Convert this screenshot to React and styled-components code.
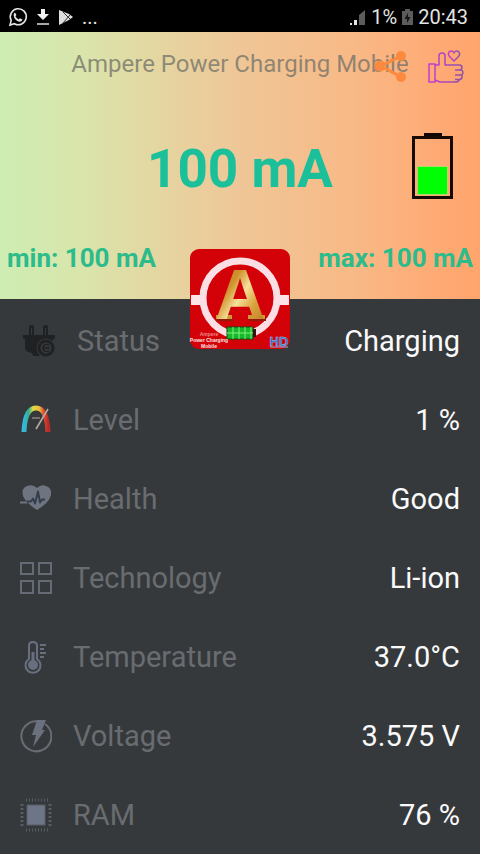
import React from "react";
import styled, { createGlobalStyle } from "styled-components";

const GlobalStyle = createGlobalStyle`
  * {
    box-sizing: border-box;
  }
  body {
    margin: 0;
    background: #36393c;
    font-family: Roboto, "Liberation Sans", sans-serif;
  }
`;

const Wrapper = styled.div`
  width: 100%;
  min-height: 100vh;
  display: flex;
  flex-direction: column;
  background: #36393c;
`;

const StatusBar = styled.div`
  height: 32px;
  padding: 2px 12px 0 8px;
  display: flex;
  justify-content: space-between;
  align-items: center;
  background: #000;
  color: #e4e4e4;
  font-size: 20px;
`;

const StatusGroup = styled.div`
  display: flex;
  align-items: center;
  gap: ${(props) => props.$gap}px;
`;

const Header = styled.header`
  position: relative;
  height: 267px;
  display: flex;
  flex-direction: column;
  justify-content: space-between;
  background: linear-gradient(
    90deg,
    #cdedb2 0%,
    #d9e5ab 17%,
    #e6d4a0 35%,
    #efc697 50%,
    #f8b986 74%,
    #ffa974 92%,
    #ffa46c 100%
  );
`;

const TitleBar = styled.div`
  position: relative;
  height: 64px;
  display: flex;
  justify-content: center;
  align-items: center;
`;

const Title = styled.h1`
  margin: 0;
  font-size: 24px;
  font-weight: 400;
  color: rgba(112, 112, 104, 0.75);
  white-space: nowrap;
`;

const Actions = styled.div`
  position: absolute;
  top: 17px;
  right: 16px;
  display: flex;
  align-items: center;
  gap: 20px;
`;

const IconButton = styled.button`
  display: flex;
  padding: 0;
  border: 0;
  background: none;
`;

const Current = styled.div`
  display: grid;
  grid-template-columns: 1fr auto 1fr;
  align-items: center;
  padding: 0 26px;
`;

const CurrentValue = styled.strong`
  grid-column: 2;
  font-size: 53px;
  line-height: 72px;
  font-weight: 700;
  color: #1bc09a;
`;

const BatteryBox = styled.div`
  grid-column: 3;
  align-self: start;
  justify-self: end;
  display: flex;
`;

const Range = styled.div`
  display: flex;
  justify-content: space-between;
  padding: 0 7px 24px;
  font-size: 26px;
  line-height: 34px;
  font-weight: 700;
  color: #2cbb8b;
`;

const LogoBox = styled.div`
  position: absolute;
  left: 50%;
  bottom: -51px;
  width: 102px;
  height: 102px;
  transform: translateX(-50%);
`;

const List = styled.dl`
  margin: 0;
  padding-top: 2px;
`;

const Row = styled.div`
  height: 79px;
  padding: 0 20px;
  display: flex;
  align-items: center;
  font-size: 29px;
`;

const Label = styled.dt`
  display: flex;
  align-items: center;
  gap: 21px;
  padding-left: ${(props) => (props.$wide ? 3 : 0)}px;
  color: #696c70;
`;

const Value = styled.dd`
  margin: 0 0 0 auto;
  color: #fafafa;
`;

const WhatsAppIcon = () => (
  <svg width="20" height="20" viewBox="0 0 20 20" fill="none">
    <path d="M2 18l1.200-4.600A8 8 0 1 1 6.400 16.700z" stroke="#e4e4e4" strokeWidth="1.600" />
    <path
      d="M7 5.500l1.400 2.600-1 1.200q1.200 2.300 3.400 3.200l1.200-1.200 2.500 1.300q-.5 2.300-3 2.100Q6.400 13.500 5.600 8.200q0-1.900 1.400-2.700z"
      fill="#e4e4e4"
    />
  </svg>
);

const DownloadIcon = () => (
  <svg width="14" height="18" viewBox="0 0 14 18" fill="#f2f2f2">
    <path d="M5 1h4v5h4l-6 6-6-6h4z" />
    <path d="M1 15h12v2H1z" fill="#a8a8a8" />
  </svg>
);

const PlayIcon = () => (
  <svg width="16" height="18" viewBox="0 0 16 18">
    <path d="M1 2l10 4 4 3-4 3-10 5z" fill="#dedede" />
    <path d="M5 4l7 7M5 15l7-8" stroke="#333" />
  </svg>
);

const SignalIcon = () => (
  <svg width="17" height="17" viewBox="0 0 17 17">
    <path d="M1 14h2v2H1zM5 11h3v5H5z" fill="#e4e4e4" />
    <path d="M10 6l6-5v15h-6z" fill="#5c5c5c" />
  </svg>
);

const SmallBatteryIcon = () => (
  <svg width="11" height="18" viewBox="0 0 11 18">
    <path d="M3 1h5v2h3v14H0V3h3z" fill="#5c5c5c" />
    <path d="M6 5L2.500 11h2.500v4L8.500 9H6z" fill="#151515" />
  </svg>
);

const ShareIcon = () => (
  <svg width="34" height="34" viewBox="0 0 34 34" fill="#fb8a3e">
    <path d="M27 6L7 16l20 11" fill="none" stroke="#fb8a3e" strokeWidth="3" />
    <circle cx="27" cy="6" r="5" />
    <circle cx="6" cy="16" r="5.500" />
    <circle cx="27" cy="27" r="5" />
  </svg>
);

const LikeIcon = () => (
  <svg width="36" height="36" viewBox="0 0 36 36" fill="none" strokeWidth="1.500" strokeLinejoin="round">
    <defs>
      <linearGradient id="like" x1="0" y1="0" x2="1" y2="0">
        <stop offset="0" stopColor="#c63bd2" />
        <stop offset="1" stopColor="#8a55a8" />
      </linearGradient>
    </defs>
    <g stroke="url(#like)">
      <path d="M1 15h6v18H1zM7 16h4V7q0-3 3-3t3 3v9h14q3 0 3 2.500t-3 2.500h-4M31 21h2q2 .5 2 2.500t-2 2.500h-6M33 26q1.500 .5 1 2.500-.5 2-3 2h-4M31 30.500q0 2.500-3 2.500H12l-5-2" />
      <path d="M26 12l-4-4q-3-3-.5-5.500 3-1.500 4.500 1.500Q27.500 1 30.500 2.500 33 5 30 8z" />
      <path d="M22 18v14" strokeDasharray="3 2" />
      <path d="M4 18v12" strokeDasharray="1 2" />
    </g>
  </svg>
);

const BatteryIcon = () => (
  <svg width="42" height="68" viewBox="0 0 42 68">
    <path d="M12 0h18v5H12z" fill="#100704" />
    <path d="M1.500 4.500h38v60h-38z" fill="none" stroke="#170904" strokeWidth="3" />
    <path d="M5.500 33.500h30v28h-30z" fill="#00ff04" stroke="#b6d66b" strokeWidth="1" />
  </svg>
);

const AppLogo = () => (
  <svg width="102" height="102" viewBox="0 0 102 102">
    <defs>
      <linearGradient id="gold" x1="0" y1="0" x2="1" y2="1">
        <stop offset="0" stopColor="#b9771d" />
        <stop offset="0.350" stopColor="#cf922d" />
        <stop offset="0.520" stopColor="#f6e09a" />
        <stop offset="0.700" stopColor="#d9a23c" />
        <stop offset="1" stopColor="#b5701a" />
      </linearGradient>
    </defs>
    <rect x="1" y="1" width="100" height="100" rx="9" fill="#d30208" />
    <path d="M2 47h14v10H2zM87 47h13v10H87z" fill="#fbe5e9" />
    <circle cx="51" cy="50" r="37" fill="none" stroke="#fbdfe5" strokeWidth="7" />
    <path d="M27 69h17v4H27zM60 69h17v4H60z" fill="#8e1d0c" />
    <path d="M27 67h16v4H27zM59 67h17v4H59z" fill="#d09834" />
    <text
      x="51"
      y="71"
      textAnchor="middle"
      fontFamily="Liberation Sans, sans-serif"
      fontWeight="700"
      fontSize="70"
      fill="url(#gold)"
    >
      A
    </text>
    <path d="M38 79h26v12H38z" fill="#16b72b" stroke="#0a4c12" />
    <path d="M64 81h3v8h-3z" fill="#3a1010" />
    <path d="M44 79v12M50 79v12M56 79v12M62 79v12M38 85h26" stroke="#82f281" strokeWidth="1" />
    <g fill="#ffe4e4" fontFamily="Liberation Sans, sans-serif" fontWeight="700" fontSize="5" textAnchor="middle">
      <text x="20" y="88" fill="#ef8585">Ampere</text>
      <text x="20" y="94">Power Charging</text>
      <text x="20" y="100">Mobile</text>
    </g>
    <text
      x="90"
      y="98"
      textAnchor="middle"
      fontFamily="Liberation Sans, sans-serif"
      fontWeight="700"
      fontSize="13"
      fill="#2d65c0"
      stroke="#a6c7ef"
      strokeWidth="0.500"
    >
      HD
    </text>
    <path d="M81 99h18" stroke="#8fb4e6" />
  </svg>
);

const PlugIcon = () => (
  <svg width="33" height="34" viewBox="0 0 33 34" fill="#1f2123">
    <path d="M6 11V3q0-2 2.500-2T11 3v8zM20 11V3q0-2 2.500-2T25 3v8z" />
    <path d="M8.500 4v7M22.500 4v7" stroke="#34373a" />
    <path d="M0 11h32v4H0zM2 15h28v8l-14 9H10l-1-3q-7-1-7-5z" />
    <circle cx="23" cy="24" r="9.500" fill="#36393c" />
    <circle cx="23" cy="24" r="7" fill="none" stroke="#1f2123" strokeWidth="3" />
    <path d="M26 21.500a3.500 3.500 0 1 0 0 5M20 24h7" fill="none" stroke="#1f2123" strokeWidth="1.500" />
  </svg>
);

const GaugeIcon = () => (
  <svg width="32" height="32" viewBox="0 0 32 32" fill="none">
    <defs>
      <linearGradient id="gauge" x1="0" y1="0" x2="1" y2="0">
        <stop offset="0" stopColor="#35b9dd" />
        <stop offset="0.200" stopColor="#36ad8d" />
        <stop offset="0.380" stopColor="#e4db42" />
        <stop offset="0.650" stopColor="#e8b93e" />
        <stop offset="0.800" stopColor="#e2522e" />
        <stop offset="1" stopColor="#bd2929" />
      </linearGradient>
    </defs>
    <path d="M4 28Q5 4 16 4t12 24" stroke="url(#gauge)" strokeWidth="5" />
    <path d="M12 14h8" stroke="#77716b" strokeWidth="2" />
    <path d="M28 5L16 25" stroke="#b9aaa0" strokeWidth="1.600" />
  </svg>
);

const HeartIcon = () => (
  <svg width="32" height="32" viewBox="0 0 32 32">
    <path d="M17 27Q6 20 3 13 1 5 7 3q6-2 10 2 4-4 9-2 6 2 5 9-2 8-14 15z" fill="#6f7580" />
    <path
      d="M5 18.500h6l2-3 2 5 3-12 2 11 2-3h3"
      fill="none"
      stroke="#343e4f"
      strokeWidth="2"
      strokeLinejoin="round"
    />
    <path d="M0 19.500h7" stroke="#6f7580" strokeWidth="2" />
  </svg>
);

const GridIcon = () => (
  <svg width="32" height="32" viewBox="0 0 32 32" fill="none" stroke="#656b75" strokeWidth="2">
    <path d="M1 1h12v11H1zM19 1h12v11H19zM1 19h12v12H1zM19 19h12v12H19z" />
  </svg>
);

const ThermometerIcon = () => (
  <svg width="32" height="34" viewBox="0 0 32 34" fill="none" stroke="#687080" strokeWidth="2">
    <path d="M9 19V6q0-4 4-4t4 4v13a7.500 7.500 0 1 1-8 0z" />
    <path d="M13 12v11" strokeWidth="3" />
    <circle cx="13" cy="25" r="4" fill="#687080" />
    <path d="M20 5h6M20 9h4M20 13h6M20 17h4" />
  </svg>
);

const BoltIcon = () => (
  <svg width="32" height="34" viewBox="0 0 32 34">
    <path d="M19 2.500A15 15 0 1 0 25 5" fill="none" stroke="#686d75" strokeWidth="2" />
    <path d="M17 1h9l-4 10h3L13 28l3-12h-4z" fill="#6b707e" />
  </svg>
);

const ChipIcon = () => (
  <svg width="32" height="34" viewBox="0 0 32 34" stroke="#565c66" strokeWidth="3">
    <path d="M6 2h22M6 32h22" strokeDasharray="1 2" />
    <path d="M2 6v23M30 6v23" strokeDasharray="2 2" />
    <rect x="7" y="7" width="18" height="20" fill="#6c7686" strokeWidth="1" />
  </svg>
);

const rows = [
  { label: "Status", value: "Charging", Icon: PlugIcon, wide: true },
  { label: "Level", value: "1 %", Icon: GaugeIcon },
  { label: "Health", value: "Good", Icon: HeartIcon },
  { label: "Technology", value: "Li-ion", Icon: GridIcon },
  { label: "Temperature", value: "37.0°C", Icon: ThermometerIcon },
  { label: "Voltage", value: "3.575 V", Icon: BoltIcon },
  { label: "RAM", value: "76 %", Icon: ChipIcon },
];

const App = () => {
  return (
    <Wrapper>
      <GlobalStyle />
      <StatusBar>
        <StatusGroup $gap={8}>
          <WhatsAppIcon />
          <DownloadIcon />
          <PlayIcon />
          <span>...</span>
        </StatusGroup>
        <StatusGroup $gap={5}>
          <SignalIcon />
          <span>1%</span>
          <SmallBatteryIcon />
          <span>20:43</span>
        </StatusGroup>
      </StatusBar>
      <Header>
        <TitleBar>
          <Title>Ampere Power Charging Mobile</Title>
          <Actions>
            <IconButton type="button" aria-label="Share">
              <ShareIcon />
            </IconButton>
            <IconButton type="button" aria-label="Like">
              <LikeIcon />
            </IconButton>
          </Actions>
        </TitleBar>
        <Current>
          <CurrentValue>100 mA</CurrentValue>
          <BatteryBox>
            <BatteryIcon />
          </BatteryBox>
        </Current>
        <Range>
          <span>min: 100 mA</span>
          <span>max: 100 mA</span>
        </Range>
        <LogoBox>
          <AppLogo />
        </LogoBox>
      </Header>
      <List>
        {rows.map(({ label, value, Icon, wide }) => (
          <Row key={label}>
            <Label $wide={wide}>
              <Icon />
              {label}
            </Label>
            <Value>{value}</Value>
          </Row>
        ))}
      </List>
    </Wrapper>
  );
};

export default App;
